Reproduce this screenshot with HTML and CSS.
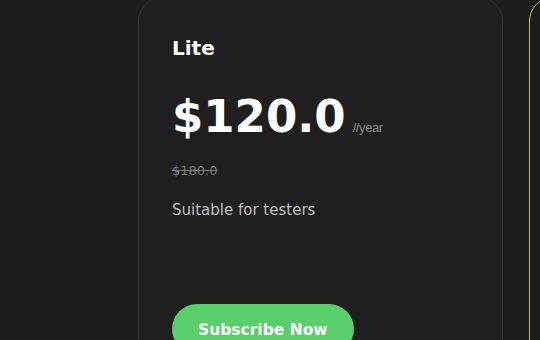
FILE: index.html
```html
<!DOCTYPE html>
<html lang="en">
<head>
    <meta charset="UTF-8">
    <meta name="viewport" content="width=device-width, initial-scale=1.0">
    <title>Plans</title>
    <link rel="stylesheet" href="styles.css">
</head>
<body>
    <div class="plans">
        <div class="card">
            <h2 class="plan-name">Lite</h2>
            <div class="price-row">
                <span class="price">$120.0</span>
                <span class="per">//year</span>
            </div>
            <div class="old-price">$180.0</div>
            <p class="desc">Suitable for testers</p>
            <button class="subscribe">Subscribe Now</button>
        </div>
        <div class="card featured"></div>
    </div>
</body>
</html>
```

FILE: styles.css
```css
body {
    margin: 0;
    background: #1c1d1f;
    font-family: "DejaVu Sans", sans-serif;
    overflow: hidden;
}
.plans {
    display: flex;
    gap: 26px;
    padding-left: 138px;
    margin-top: -3px;
}
.card {
    flex: 0 0 365px;
    box-sizing: border-box;
    height: 420px;
    background: #1f1f1f;
    border: 1px solid #333335;
    border-radius: 24px;
    padding: 38px 33px;
}
.featured {
    background: #1c1d1f;
    border-color: #dcb92c;
}
.plan-name {
    margin: 0;
    font-size: 20px;
    line-height: 24px;
    font-weight: bold;
    color: #ffffff;
}
.price-row {
    display: flex;
    align-items: baseline;
    margin-top: 29px;
}
.price {
    font-size: 45px;
    line-height: 55px;
    font-weight: bold;
    color: #ffffff;
}
.per {
    margin-left: 7px;
    font-family: "Liberation Sans", sans-serif;
    font-size: 13px;
    letter-spacing: -0.4px;
    color: #8a8a8a;
}
.old-price {
    margin-top: 19px;
    font-size: 13px;
    line-height: 16px;
    color: #7a7a7a;
    text-decoration: line-through;
}
.desc {
    margin: 20px 0 0;
    font-size: 15px;
    line-height: 22px;
    color: #bdbdbd;
}
.subscribe {
    margin-top: 83px;
    background: #58cf6b;
    color: #ffffff;
    border: none;
    border-radius: 30px;
    padding: 17px 26px 15px;
    font-family: "DejaVu Sans", sans-serif;
    font-size: 15.5px;
    line-height: 18px;
    font-weight: bold;
    cursor: pointer;
}
```
